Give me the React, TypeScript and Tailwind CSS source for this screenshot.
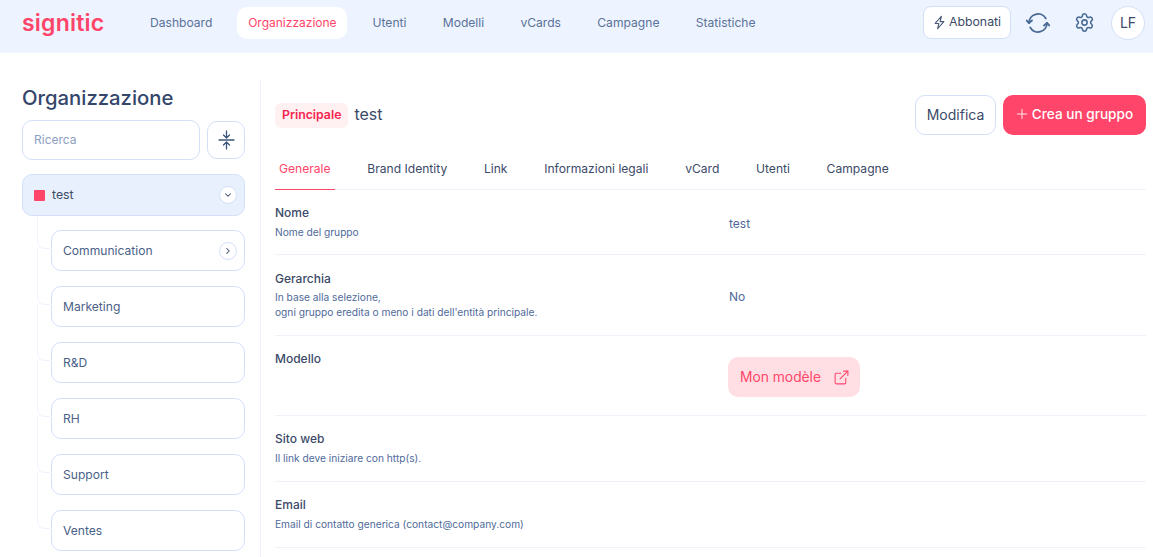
import { ChevronDown, ChevronRight, Plus, Settings, ExternalLink } from "lucide-react";

const font = { fontFamily: "Inter, 'Liberation Sans', sans-serif" };

function Row({ title, sub, value, className, top = "pt-[15px]", subClass = "mt-[4px] leading-[14px]", valueClass = "pt-[4px]" }: { title: string; sub?: React.ReactNode; value?: React.ReactNode; className: string; top?: string; subClass?: string; valueClass?: string }) {
  return (
    <div className={`flex items-stretch border-b border-[#eef2f9] ${className}`}>
      <div className={`w-[454px] shrink-0 ${top}`}>
        <div className="text-[12px] leading-[16px] font-medium text-[#3c4a68]">{title}</div>
        {sub && <div className={`text-[10.2px] text-[#4f6a9a] ${subClass}`}>{sub}</div>}
      </div>
      <div className={`flex items-center text-[12px] text-[#4f6a9a] ${valueClass}`}>{value}</div>
    </div>
  );
}

function Child({ label, arrow, first }: { label: string; arrow?: boolean; first?: boolean }) {
  return (
    <div className="relative ml-[29px] flex h-[41px] items-center justify-between rounded-[10px] border border-[#d3e0f7] bg-white pl-[11px] pr-[7px] pt-[1px] text-[12.1px] text-[#4a5f88]">
      <div
        className={`absolute left-[-15px] w-[15px] rounded-bl-[8px] border-b border-l border-[#eef3fc] ${
          first ? "top-[-15px] h-[33px]" : "top-[-39px] h-[57px]"
        }`}
      />
      {label}
      {arrow && (
        <span className="-mt-[1px] flex h-[18px] w-[18px] items-center justify-center rounded-full border border-[#d3e0f7]">
          <ChevronRight size={10} strokeWidth={2.5} className="text-[#3c4a68]" />
        </span>
      )}
    </div>
  );
}

export default function App() {
  const nav = ["Utenti", "Modelli", "vCards", "Campagne", "Statistiche"];
  const tabs = ["Brand Identity", "Link", "Informazioni legali", "vCard", "Utenti", "Campagne"];
  return (
    <div style={font} className="h-[557px] overflow-hidden bg-white">
      <header className="flex h-[53px] items-center bg-[#edf4ff] pb-[8px] pl-[22px] pr-[8px]">
        <div className="w-[117px] text-[23px] leading-[24px] font-semibold tracking-[0.2px] text-[#ff4569]">signitic</div>
        <nav className="flex items-center gap-[14px] text-[12.1px] text-[#5b7299]">
          <span className="px-[11px] pt-[2px]">Dashboard</span>
          <span className="flex h-[32px] w-[110px] items-center justify-center rounded-[10px] bg-white pt-[1px] text-[12px] text-[#ff4569]">Organizzazione</span>
          {nav.map((n) => (
            <span key={n} className="px-[11.15px] pt-[2px]">{n}</span>
          ))}
        </nav>
        <div className="ml-auto flex items-center">
          <div className="flex h-[33px] w-[88px] items-center justify-center gap-[2px] rounded-[8px] border border-[#d3e0f7] bg-white pr-[1px] text-[12.3px] text-[#3c4a68]">
            <svg width="15" height="15" viewBox="0 0 24 24" fill="none" stroke="#4a5a78" strokeWidth="1.8" strokeLinejoin="round" strokeLinecap="round">
              <path d="M15 2 L5 13.5 H11 L9 22 L19 10.5 H13 Z" />
            </svg>
            Abbonati
          </div>
          <svg width="24" height="24" viewBox="0 0 24 24" fill="none" stroke="#4a6a96" strokeWidth="1.8" strokeLinecap="round" strokeLinejoin="round" className="ml-[15px]">
            <path d="M19.8 7.500A9 9 0 0 0 3 12" />
            <path d="M0.500 9.500L3 12l3-2.500" />
            <path d="M4.200 16.500A9 9 0 0 0 21 12" />
            <path d="M18 14.500L21 12l2.500 2.500" />
          </svg>
          <Settings size={21} strokeWidth={1.8} className="ml-[24px] text-[#4a6a96]" />
          <div className="ml-[16px] flex h-[34px] w-[34px] items-center justify-center rounded-full border border-[#d3e0f7] bg-white text-[14px] text-[#3c4a68]">LF</div>
        </div>
      </header>
      <div className="flex h-[504px]">
        <aside className="mt-[27px] w-[261px] shrink-0 border-r border-[#edf2fb] pl-[22px] pr-[15px]">
          <h1 className="text-[20.3px] leading-[36px] font-medium text-[#34466a]">Organizzazione</h1>
          <div className="mt-[4px] flex items-center gap-[7px]">
            <div className="flex h-[40px] w-[178px] items-center rounded-[10px] border border-[#d3e0f7] pl-[11px] text-[12px] text-[#8da0bf]">Ricerca</div>
            <div className="flex h-[38px] w-[38px] items-center justify-center rounded-[10px] border border-[#d3e0f7]">
              <svg width="17" height="20" viewBox="0 0 17 20" fill="none" stroke="#3c5578" strokeWidth="1.3" strokeLinecap="round" strokeLinejoin="round">
                <path d="M1 10h15M8.500 1v6.500M8.500 12.500V19M5.500 5l3 3 3-3M5.500 15l3-3 3 3" />
              </svg>
            </div>
          </div>
          <div className="mt-[14px] flex h-[42px] items-center rounded-[10px] border border-[#d3e0f7] bg-[#e8f0fd] pl-[11px] pr-[7px] text-[12.3px] text-[#3c4a68]">
            <span className="mr-[7px] h-[11px] w-[11px] rounded-[1px] bg-[#ff4569]" />
            test
            <span className="ml-auto flex h-[18px] w-[18px] items-center justify-center rounded-full border border-[#d3e0f7] bg-white">
              <ChevronDown size={10} strokeWidth={2.5} className="text-[#3c4a68]" />
            </span>
          </div>
          <div className="mt-[14px] flex flex-col gap-[15px]">
            <Child label="Communication" arrow first />
            <Child label="Marketing" />
            <Child label="R&D" />
            <Child label="RH" />
            <Child label="Support" />
            <Child label="Ventes" />
          </div>
        </aside>
        <main className="min-w-0 flex-1 pl-[14px] pr-[7px] pt-[42px]">
          <div className="flex h-[40px] items-center">
            <span className="flex h-[25px] items-center rounded-[6px] bg-[#fff0f2] px-[7px] text-[12.3px] font-semibold text-[#f5244f]">Principale</span>
            <span className="ml-[6px] pb-[2px] text-[16px] text-[#3c4a68]">test</span>
            <div className="ml-auto flex h-[40px] w-[81px] items-center justify-center rounded-[10px] border border-[#d3e0f7] pb-[2px] text-[14px] text-[#3c4a68]">Modifica</div>
            <div className="ml-[7px] flex h-[40px] w-[143px] items-center justify-center gap-[2px] rounded-[10px] bg-[#ff4569] pb-[2px] pr-[2px] text-[13.6px] font-medium text-white">
              <Plus size={16} strokeWidth={1.3} />Crea un gruppo
            </div>
          </div>
          <div className="mt-[14px] flex h-[41px] gap-[28.7px] border-b border-[#eef2f9] text-[12.1px] text-[#3c4a68]">
            <span className="-mb-px flex items-center border-b border-[#ff4569] px-[4px] text-[#ff4569]">Generale</span>
            {tabs.map((t) => (
              <span key={t} className="flex items-center px-[4px]">{t}</span>
            ))}
          </div>
          <Row className="h-[65px]" title="Nome" sub="Nome del gruppo" value="test" />
          <Row
            className="h-[81px]"
            top="pt-[16px]"
            subClass="mt-[3px] leading-[15px]"
            title="Gerarchia"
            sub={<>In base alla selezione,<br />ogni gruppo eredita o meno i dati dell'entità principale.</>}
            value="No"
          />
          <Row
            className="h-[80px]"
            title="Modello"
            valueClass="pt-[2px]"
            value={
              <span className="-ml-px flex h-[40px] w-[132px] items-center justify-between rounded-[10px] bg-[#ffdfe4] pl-[12px] pr-[10px] pt-[1px] text-[13.8px] text-[#ff4569]">
                Mon modèle
                <ExternalLink size={17} strokeWidth={1.5} />
              </span>
            }
          />
          <Row className="h-[66px]" title="Sito web" sub="Il link deve iniziare con http(s)." />
          <Row className="h-[66px]" title="Email" sub="Email di contatto generica (contact@company.com)" />
        </main>
      </div>
    </div>
  );
}
